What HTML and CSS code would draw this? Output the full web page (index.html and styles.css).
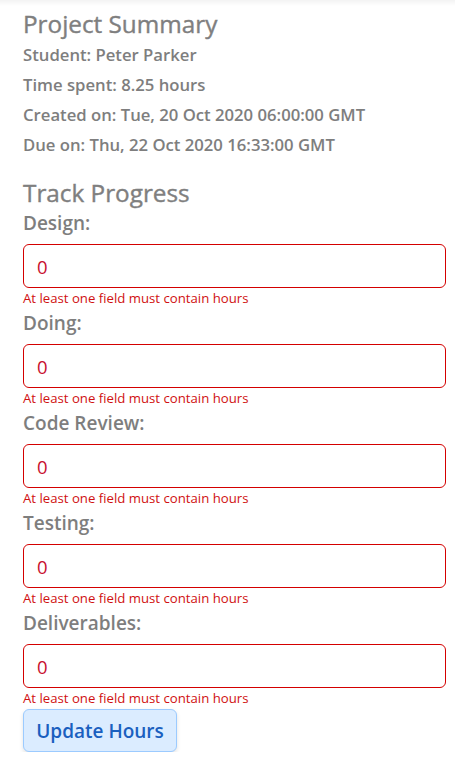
FILE: index.html
```html
<!DOCTYPE html>
<html lang="en">
<head>
<meta charset="utf-8">
<title>Project Summary</title>
<link rel="stylesheet" href="styles.css">
</head>
<body>
<div class="top-shade"></div>
<main class="page">
  <section class="summary">
    <h2 class="title">Project Summary</h2>
    <p class="info">Student: Peter Parker</p>
    <p class="info">Time spent: 8.25 hours</p>
    <p class="info">Created on: Tue, 20 Oct 2020 06:00:00 GMT</p>
    <p class="info">Due on: Thu, 22 Oct 2020 16:33:00 GMT</p>
  </section>
  <form class="progress">
    <h2 class="title title-track">Track Progress</h2>
    <div class="field">
      <label class="label" for="design">Design:</label>
      <input class="input" id="design" type="text" value="0">
      <div class="error">At least one field must contain hours</div>
    </div>
    <div class="field">
      <label class="label" for="doing">Doing:</label>
      <input class="input" id="doing" type="text" value="0">
      <div class="error">At least one field must contain hours</div>
    </div>
    <div class="field">
      <label class="label" for="review">Code Review:</label>
      <input class="input" id="review" type="text" value="0">
      <div class="error">At least one field must contain hours</div>
    </div>
    <div class="field">
      <label class="label" for="testing">Testing:</label>
      <input class="input" id="testing" type="text" value="0">
      <div class="error">At least one field must contain hours</div>
    </div>
    <div class="field">
      <label class="label" for="deliverables">Deliverables:</label>
      <input class="input" id="deliverables" type="text" value="0">
      <div class="error">At least one field must contain hours</div>
    </div>
    <button class="btn" type="button">Update Hours</button>
  </form>
</main>
</body>
</html>
```
FILE: styles.css
```css
html, body {
  margin: 0;
  padding: 0;
  background: #ffffff;
}
body {
  font-family: "Open Sans", "Noto Sans", "Liberation Sans", sans-serif;
  color: #7e7e7e;
}
.top-shade {
  height: 6px;
  width: 455px;
  background: linear-gradient(#f3f3f3, #ffffff);
}
.page {
  padding: 3px 20px 0 23px;
}
.title {
  margin: 0 0 2px 0;
  font-size: 24.3px;
  line-height: 29px;
  font-weight: 400;
  color: #7f7f7f;
  -webkit-text-stroke: 0.4px #7f7f7f;
}
.title-track {
  margin: 0 0 2px 0;
}
.summary {
  margin-bottom: 18px;
}
.info {
  margin: 0;
  font-size: 16.7px;
  line-height: 30px;
  font-weight: 600;
}
.progress {
  display: flex;
  flex-direction: column;
}
.field {
  display: flex;
  flex-direction: column;
}
.label {
  font-size: 19px;
  line-height: 29px;
  font-weight: 600;
  margin-bottom: 6px;
}
.input {
  box-sizing: border-box;
  height: 44px;
  width: 100%;
  margin: 0;
  padding: 0 13px;
  border: 1px solid #d40000;
  border-radius: 6px;
  font-family: inherit;
  font-size: 18.5px;
  color: #c8102e;
  background: #fff;
  outline: none;
}
.error {
  font-size: 13.2px;
  line-height: 21px;
  color: #d01010;
}
.btn {
  align-self: flex-start;
  box-sizing: border-box;
  height: 43px;
  width: 154px;
  padding: 0;
  border: 1px solid #9ccbff;
  border-radius: 6px;
  background: #dbecff;
  color: #1a5fbf;
  font-family: inherit;
  font-size: 19px;
  font-weight: 600;
  box-shadow: 0 2px 4px rgba(0, 0, 0, 0.12);
}
```
